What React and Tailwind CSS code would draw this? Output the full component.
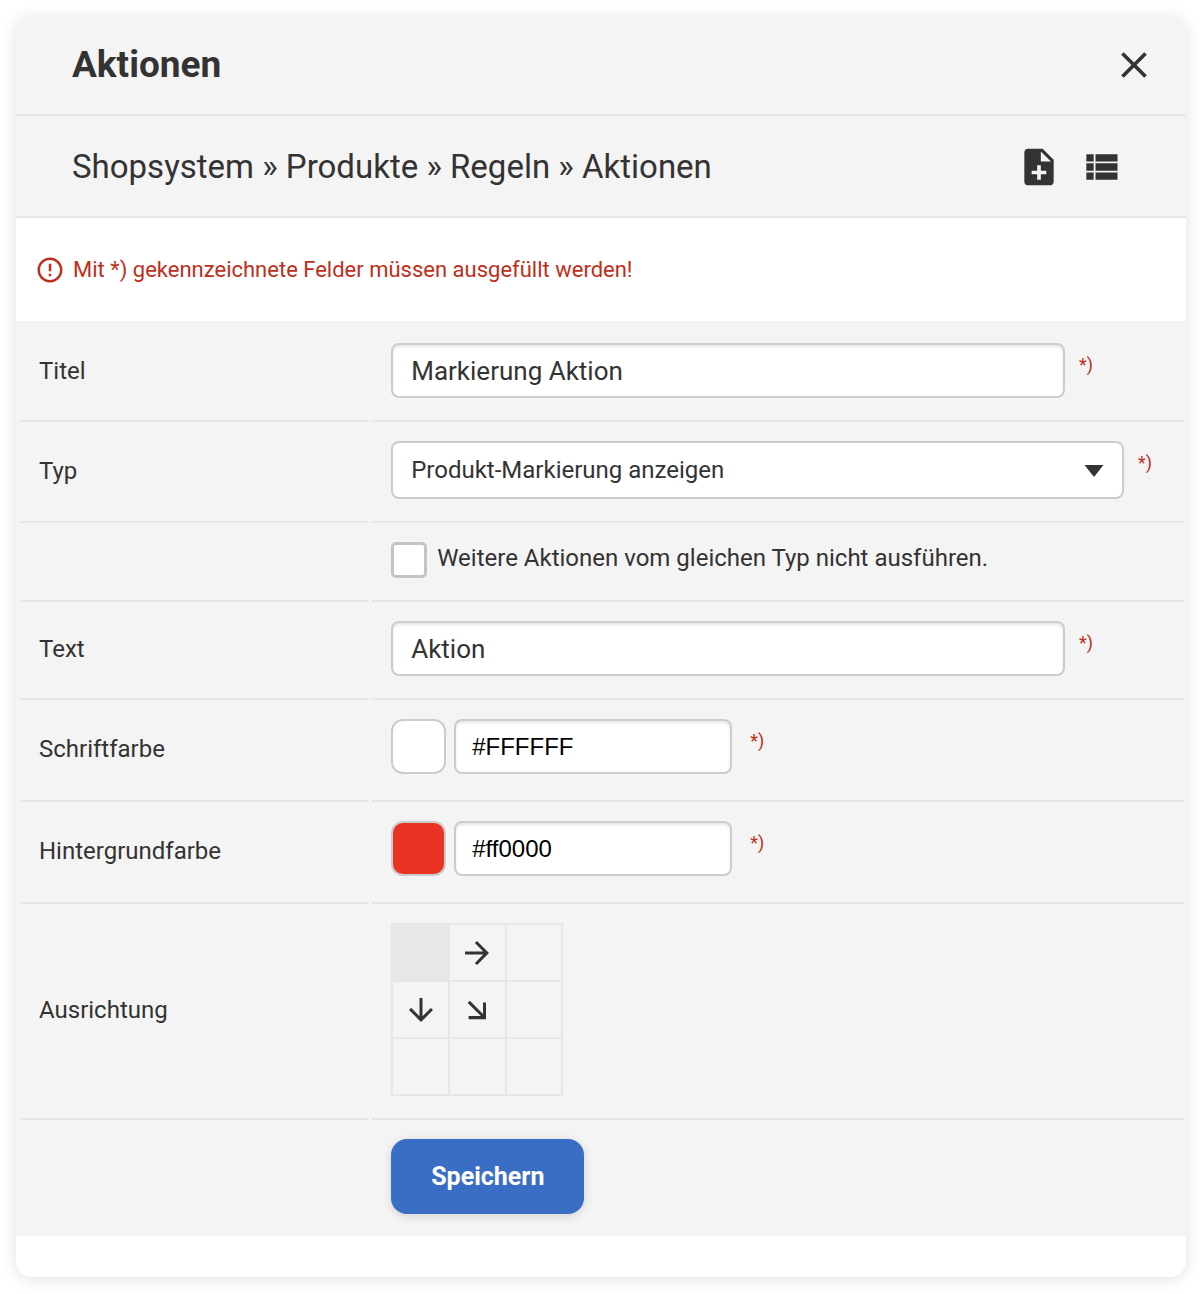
import React, { useState } from "react";
import { MdArrowDownward, MdArrowForward, MdClose, MdErrorOutline, MdNoteAdd } from "react-icons/md";

const inputClass =
  "h-[55px] rounded-lg border-2 border-[#cccccc] bg-white shadow-[inset_0_2px_3px_rgba(0,0,0,0.1)] focus:outline-none focus:border-[#3a6dc4]";

const ListIcon = () => (
  <svg viewBox="0 0 24 24" className="size-11" fill="currentColor" aria-hidden="true">
    <path d="M4 14h4v-4H4v4zm0 5h4v-4H4v4zM4 9h4V5H4v4zm5 5h12v-4H9v4zm0 5h12v-4H9v4zM9 5v4h12V5H9z" />
  </svg>
);

const ArrowSouthEast = () => (
  <svg viewBox="0 0 24 24" className="size-9" fill="currentColor" aria-hidden="true">
    <path d="M5.8 7.3 7.2 5.9 16 14.6V7h2v11.1H6.4v-2.1h8.2z" />
  </svg>
);

const Required = () => <span className="pt-[10px] text-[18px] leading-6 text-[#bd2f1b]">*)</span>;

const Row = ({ label, htmlFor, last, children }) => {
  const line = last ? "" : "border-b-2 border-[#e7e7e7]";

  return (
    <div className="grid grid-cols-[30%_minmax(0,1fr)] gap-[3px]">
      <div className={`flex items-center pb-[2px] pl-[19px] ${line}`}>
        {htmlFor ? <label htmlFor={htmlFor}>{label}</label> : <span>{label}</span>}
      </div>
      <div className={`pt-[19px] pb-[22px] pl-[19px] ${line}`}>{children}</div>
    </div>
  );
};

const TextField = ({ id, value, onChange }) => (
  <div className="flex items-start gap-[14px]">
    <input
      id={id}
      type="text"
      value={value}
      onChange={(e) => onChange(e.target.value)}
      className={`${inputClass} w-[85%] px-[18px] text-[26px]`}
    />
    <Required />
  </div>
);

const ColorField = ({ id, value, onChange }) => (
  <div className="flex items-start pb-1">
    <button
      type="button"
      aria-label={`Farbe ${value}`}
      className="mr-2 size-[55px] rounded-xl border-2 border-[#cccccc]"
      style={{ backgroundColor: value === "#ff0000" ? "#eb3323" : value }}
    />
    <input
      id={id}
      type="text"
      value={value}
      onChange={(e) => onChange(e.target.value)}
      className={`${inputClass} mr-[18px] w-[278px] px-4 font-['Liberation_Sans',sans-serif] text-[24px] text-black`}
    />
    <Required />
  </div>
);

const positions = [
  { id: "top-left" },
  { id: "top", icon: <MdArrowForward className="size-9" /> },
  { id: "top-right" },
  { id: "left", icon: <MdArrowDownward className="size-9" /> },
  { id: "center", icon: <ArrowSouthEast /> },
  { id: "right" },
  { id: "bottom-left" },
  { id: "bottom" },
  { id: "bottom-right" },
];

const App = () => {
  const [title, setTitle] = useState("Markierung Aktion");
  const [type, setType] = useState("label");
  const [stop, setStop] = useState(false);
  const [text, setText] = useState("Aktion");
  const [fontColor, setFontColor] = useState("#FFFFFF");
  const [background, setBackground] = useState("#ff0000");
  const [position, setPosition] = useState("top-left");

  return (
    <div className="bg-white pt-4 pr-[14px] pb-[17px] pl-4 font-['Roboto',sans-serif] text-[#333333]">
      <section className="overflow-hidden rounded-2xl bg-white pb-[41px] shadow-[0_2px_16px_rgba(0,0,0,0.12)]">
        <header className="flex h-[100px] items-center justify-between border-b-2 border-[#e7e7e7] bg-[#f4f4f4] pr-[30px] pl-14">
          <h1 className="text-[37px] leading-11 font-bold">Aktionen</h1>
          <button type="button" aria-label="Schließen">
            <MdClose className="size-11" />
          </button>
        </header>

        <div className="flex h-[102px] items-center justify-between border-b-2 border-[#e7e7e7] bg-[#f4f4f4] pt-[2px] pr-[63px] pl-14">
          <h2 className="text-[33px] leading-11">Shopsystem » Produkte » Regeln » Aktionen</h2>
          <div className="flex gap-[18px]">
            <button type="button" aria-label="Neu">
              <MdNoteAdd className="size-11" />
            </button>
            <button type="button" aria-label="Liste">
              <ListIcon />
            </button>
          </div>
        </div>

        <p className="flex h-[103px] items-center gap-2 pl-[19px] text-[22px] text-[#bd2f1b]">
          <MdErrorOutline className="size-[30px]" />
          Mit *) gekennzeichnete Felder müssen ausgefüllt werden!
        </p>

        <form className="bg-[#f4f4f4] pt-[3px] pr-[2px] pl-1 text-[24px]" onSubmit={(e) => e.preventDefault()}>
          <Row label="Titel" htmlFor="title">
            <TextField id="title" value={title} onChange={setTitle} />
          </Row>

          <Row label="Typ" htmlFor="type">
            <div className="flex items-start gap-[14px] pr-8">
              <div className="relative flex-1">
                <select
                  id="type"
                  value={type}
                  onChange={(e) => setType(e.target.value)}
                  className="block h-[58px] w-full appearance-none rounded-lg border-2 border-[#cccccc] bg-white px-[18px]"
                >
                  <option value="label">Produkt-Markierung anzeigen</option>
                </select>
                <svg
                  viewBox="0 0 20 12"
                  className="pointer-events-none absolute top-6 right-5 h-3 w-5"
                  fill="currentColor"
                  aria-hidden="true"
                >
                  <path d="M.5 0h19L10 12z" />
                </svg>
              </div>
              <Required />
            </div>
          </Row>

          <Row>
            <div className="flex items-start gap-[10px]">
              <input
                id="stop"
                type="checkbox"
                checked={stop}
                onChange={(e) => setStop(e.target.checked)}
                className="size-9 appearance-none rounded-[5px] border-[3px] border-[#c4c4c4] bg-white checked:bg-[#3a6dc4]"
              />
              <label htmlFor="stop" className="leading-8">
                Weitere Aktionen vom gleichen Typ nicht ausführen.
              </label>
            </div>
          </Row>

          <Row label="Text" htmlFor="text">
            <TextField id="text" value={text} onChange={setText} />
          </Row>

          <Row label="Schriftfarbe" htmlFor="font-color">
            <ColorField id="font-color" value={fontColor} onChange={setFontColor} />
          </Row>

          <Row label="Hintergrundfarbe" htmlFor="background">
            <ColorField id="background" value={background} onChange={setBackground} />
          </Row>

          <Row label="Ausrichtung">
            <div className="grid w-[172px] grid-cols-3 gap-[2px] border-2 border-[#e7e7e7] bg-[#e7e7e7]">
              {positions.map(({ id, icon }) => (
                <button
                  key={id}
                  type="button"
                  aria-label={id}
                  onClick={() => setPosition(id)}
                  className={`flex h-[55px] items-center justify-center ${
                    position === id ? "bg-[#e7e7e7]" : "bg-[#f4f4f4]"
                  }`}
                >
                  {icon}
                </button>
              ))}
            </div>
          </Row>

          <Row last>
            <button
              type="submit"
              className="block h-[75px] rounded-2xl bg-[#3a6dc4] px-10 text-[25px] font-bold text-white shadow-[0_2px_10px_rgba(0,0,0,0.14)]"
            >
              Speichern
            </button>
          </Row>
        </form>
      </section>
    </div>
  );
};

export default App;
